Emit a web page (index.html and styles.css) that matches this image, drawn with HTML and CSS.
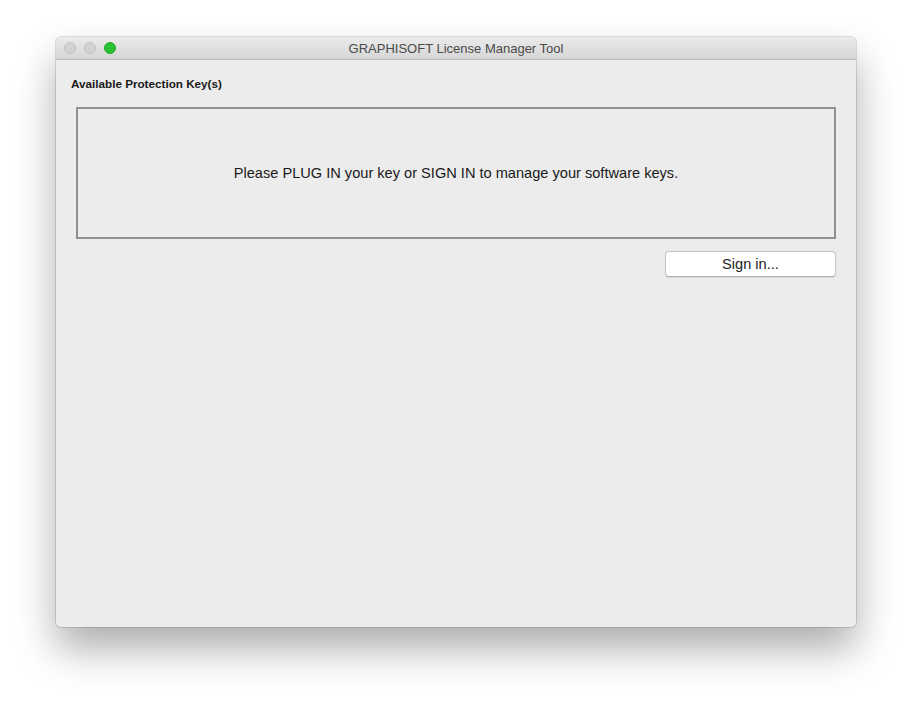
FILE: index.html
```html
<!DOCTYPE html>
<html lang="en">
<head>
    <meta charset="UTF-8">
    <meta name="viewport" content="width=device-width, initial-scale=1.0">
    <title>GRAPHISOFT License Manager Tool</title>
    <link rel="stylesheet" href="styles.css">
</head>
<body>
    <div class="window">
        <div class="titlebar">
            <div class="lights">
                <span class="light off"></span>
                <span class="light off"></span>
                <span class="light zoom"></span>
            </div>
            <div class="title">GRAPHISOFT License Manager Tool</div>
        </div>
        <div class="content">
            <div class="label">Available Protection Key(s)</div>
            <div class="keys">
                Please PLUG IN your key or SIGN IN to manage your software keys.
            </div>
            <div class="actions">
                <button class="signin">Sign in...</button>
            </div>
        </div>
    </div>
</body>
</html>
```

FILE: styles.css
```css
html, body {
    height: 100%;
}
body {
    margin: 0;
    padding-top: 37px;
    box-sizing: border-box;
    min-height: 701px;
    background: #ffffff;
    font-family: 'Liberation Sans', Arial, sans-serif;
    color: #222;
}
.window {
    width: 800px;
    height: 590px;
    margin-left: 56px;
    background: #ececec;
    border-radius: 5px;
    box-shadow: 0 0 0 1px rgba(0, 0, 0, 0.12), 0 22px 40px rgba(0, 0, 0, 0.32);
    overflow: hidden;
}
.titlebar {
    height: 22px;
    position: relative;
    background: linear-gradient(to bottom, #ebebeb, #d6d6d6);
    border-bottom: 1px solid #bdbdbd;
    display: flex;
    align-items: center;
    justify-content: center;
}
.lights {
    position: absolute;
    left: 8px;
    top: 5px;
    display: flex;
    gap: 8px;
}
.light {
    width: 12px;
    height: 12px;
    border-radius: 50%;
    box-sizing: border-box;
}
.light.off {
    background: #d2d2d2;
    border: 1px solid #c2c2c2;
}
.light.zoom {
    background: #29c232;
    border: 1px solid #1fa827;
}
.title {
    font-size: 13px;
    color: #4a4a4a;
}
.content {
    padding: 17px 20px 0 20px;
}
.label {
    font-size: 11.7px;
    font-weight: bold;
    margin-left: -5px;
    line-height: 14px;
    color: #1a1a1a;
}
.keys {
    margin-top: 16px;
    height: 128px;
    border: 2px solid #909090;
    display: flex;
    align-items: center;
    justify-content: center;
    font-size: 14.6px;
    color: #1a1a1a;
}
.actions {
    display: flex;
    justify-content: flex-end;
    margin-top: 12px;
}
.signin {
    width: 171px;
    height: 26px;
    background: #fff;
    border: 1px solid #c6c6c6;
    border-bottom-color: #aeaeae;
    border-radius: 4px;
    font-family: 'Liberation Sans', Arial, sans-serif;
    font-size: 14.6px;
    color: #222;
    box-shadow: 0 1px 1px rgba(0, 0, 0, 0.08);
}
```
